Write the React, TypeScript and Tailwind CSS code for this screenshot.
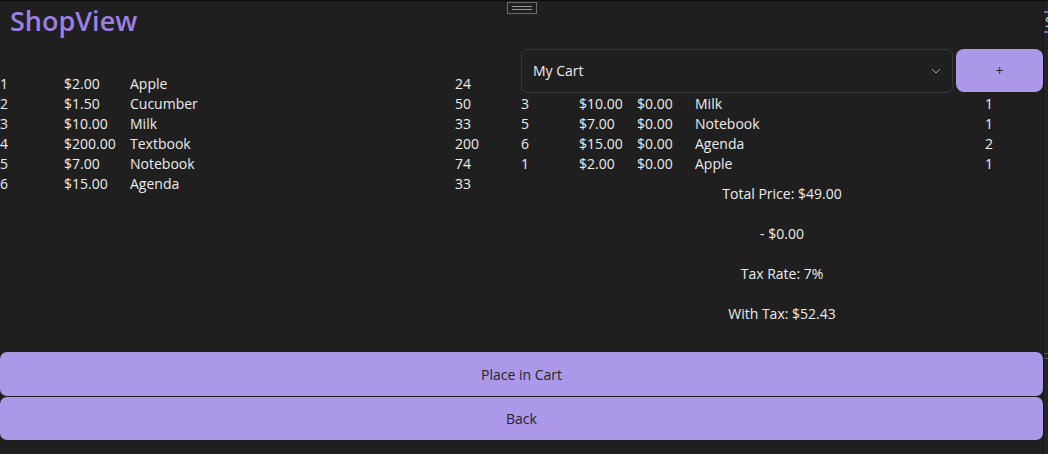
import React from "react";

const products = [
  ["1", "$2.00", "Apple", "24"],
  ["2", "$1.50", "Cucumber", "50"],
  ["3", "$10.00", "Milk", "33"],
  ["4", "$200.00", "Textbook", "200"],
  ["5", "$7.00", "Notebook", "74"],
  ["6", "$15.00", "Agenda", "33"],
];

const cart = [
  ["3", "$10.00", "$0.00", "Milk", "1"],
  ["5", "$7.00", "$0.00", "Notebook", "1"],
  ["6", "$15.00", "$0.00", "Agenda", "2"],
  ["1", "$2.00", "$0.00", "Apple", "1"],
];

export default function App() {
  return (
    <div
      className="relative w-[1048px] h-[454px] overflow-hidden bg-[#1f1f1f] text-[#ececec] flex border-t border-[#0e0e0e]"
      style={{ fontFamily: '"Open Sans", "Noto Sans", sans-serif' }}
    >
      <div className="w-[1043px] flex flex-col">
        <div className="h-[48px] pl-[10px] pt-[2px]">
          <span className="text-[27px] font-semibold text-[#9c7fe3] leading-[36px]">ShopView</span>
        </div>
        <div className="flex h-[286px]">
          <div className="w-[521px] pt-[25px] text-[14px]">
            {products.map((p) => (
              <div key={p[0]} className="flex h-[20px] items-center leading-[20px]">
                <span className="w-[64px]">{p[0]}</span>
                <span className="w-[66px]">{p[1]}</span>
                <span className="w-[325px]">{p[2]}</span>
                <span className="w-[66px]">{p[3]}</span>
              </div>
            ))}
          </div>
          <div className="flex-1 flex flex-col text-[14px]">
            <div className="flex h-[45px] gap-[3px]">
              <div className="w-[432px] h-[44px] rounded-[6px] border border-[#363636] flex items-center justify-between pl-[11px] pr-[11px] pb-[1px]">
                <span className="text-[14px]">My Cart</span>
                <svg width="10" height="6" viewBox="0 0 10 6" fill="none">
                  <path d="M1 1L5 5L9 1" stroke="#a8a8a8" strokeWidth="1" />
                </svg>
              </div>
              <div className="flex-1 h-[43px] rounded-[8px] bg-[#ab98e8] flex items-center justify-center text-[#2a2a2a] text-[14px]">
                +
              </div>
            </div>
            {cart.map((c) => (
              <div key={c[0]} className="flex h-[20px] items-center leading-[20px]">
                <span className="w-[58px]">{c[0]}</span>
                <span className="w-[58px]">{c[1]}</span>
                <span className="w-[58px]">{c[2]}</span>
                <span className="flex-1">{c[3]}</span>
                <span className="w-[58px]">{c[4]}</span>
              </div>
            ))}
            <div className="h-[40px] flex items-center justify-center pb-[2px]">Total Price: $49.00</div>
            <div className="h-[40px] flex items-center justify-center pb-[2px]">- $0.00</div>
            <div className="h-[40px] flex items-center justify-center pb-[2px]">Tax Rate: 7%</div>
            <div className="h-[40px] flex items-center justify-center pb-[2px]">With Tax: $52.43</div>
          </div>
        </div>
        <div className="mt-[17px] flex flex-col gap-[1px] text-[14px] text-[#262626]">
          <div className="h-[44px] rounded-[7px] bg-[#ab98e8] flex items-center justify-center">Place in Cart</div>
          <div className="h-[43px] rounded-[7px] bg-[#ab98e8] flex items-center justify-center">Back</div>
        </div>
      </div>
      <div className="w-[5px] border-l border-[#151515] bg-[#232323] flex flex-col">
        <div className="mt-[10px] h-[2px] bg-[#7b62d0]" />
        <div className="h-[18px] overflow-hidden text-[14px] leading-[18px] text-[#cfd8ff] pl-[1px]">S</div>
        <div className="h-[2px] bg-[#7b62d0]" />
        <div className="mt-[320px] h-[1px] bg-[#555]" />
        <div className="mt-[4px] h-[1px] bg-[#555]" />
      </div>
      <div className="absolute left-[507px] top-[1px] w-[30px] h-[12px] border border-[#6a6a6a] flex flex-col items-center justify-center gap-[2px]">
        <div className="w-[20px] h-[1px] bg-[#9a9a9a]" />
        <div className="w-[20px] h-[1px] bg-[#9a9a9a]" />
      </div>
    </div>
  );
}
